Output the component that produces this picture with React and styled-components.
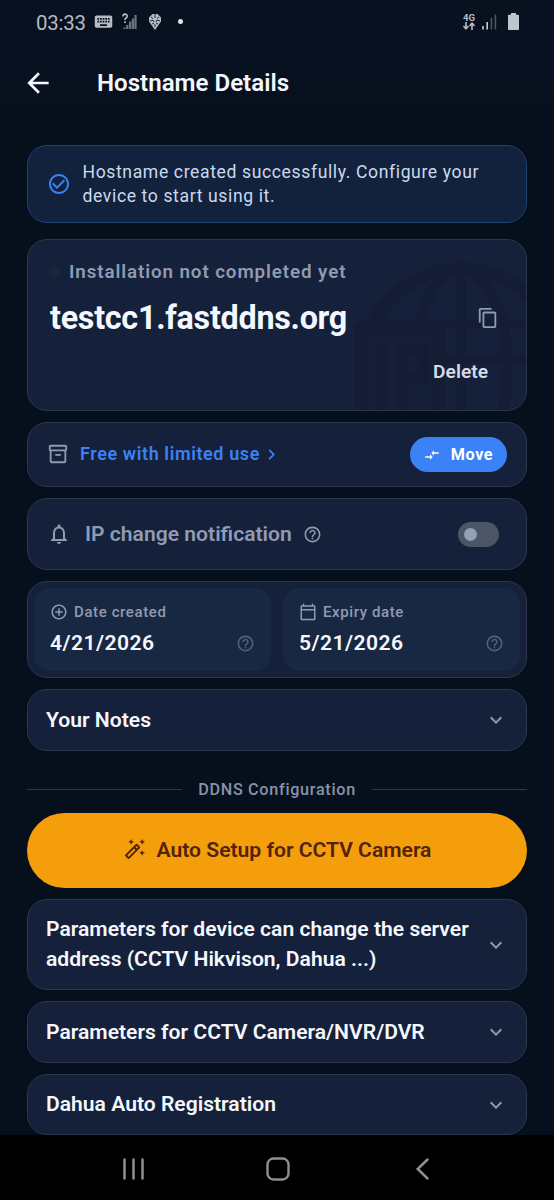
import React, { useState } from "react";
import styled, { createGlobalStyle, ThemeProvider } from "styled-components";
import {
  MdAddCircleOutline,
  MdArrowBack,
  MdCheckCircleOutline,
  MdChevronRight,
  MdCompareArrows,
  MdContentCopy,
  MdHelpOutline,
  MdKeyboard,
  MdKeyboardArrowDown,
  MdNotificationsNone,
  MdOutlineAutoFixHigh,
  MdOutlineCalendarToday,
  MdOutlineInventory2,
} from "react-icons/md";

const theme = {
  colors: {
    page: "#05101c",
    bar: "#08111f",
    card: "#15203a",
    tile: "#182742",
    border: "#2c374b",
    text: "#f4f8fe",
    muted: "#8f9bb3",
    faint: "#52617a",
    primary: "#3b82f6",
    accent: "#f59e0b",
    onAccent: "#52230a",
    status: "#b6bcc4",
  },
};

const GlobalStyle = createGlobalStyle`
  * {
    box-sizing: border-box;
  }

  body {
    margin: 0;
    background: ${theme.colors.page};
    font-family: Roboto, "Liberation Sans", sans-serif;
  }

  button {
    font-family: inherit;
    border: none;
    padding: 0;
    background: none;
    color: inherit;
  }

  h1, h2, p {
    margin: 0;
  }

  svg {
    display: block;
    flex-shrink: 0;
  }
`;

const Screen = styled.div`
  width: 554px;
  height: 1200px;
  display: flex;
  flex-direction: column;
  overflow: hidden;
  background: ${({ theme }) => theme.colors.page};
  color: ${({ theme }) => theme.colors.text};
`;

const StatusBar = styled.div`
  height: 44px;
  flex-shrink: 0;
  display: flex;
  align-items: center;
  padding: 0 35px 1px 36px;
  color: ${({ theme }) => theme.colors.status};
  background: ${({ theme }) => theme.colors.bar};
`;

const Clock = styled.span`
  width: 57px;
  font-size: 20.4px;
  letter-spacing: -0.2px;
  padding-top: 3px;
`;

const StatusIcons = styled.div`
  display: flex;
  align-items: center;
  gap: 8px;
`;

const Spacer = styled.div`
  flex: 1;
`;

const NetworkType = styled.div`
  display: flex;
  flex-direction: column;
  align-items: center;
  margin-right: -1px;
  font-size: 9.5px;
  font-weight: 700;
  line-height: 9px;
`;

const Brain = styled.svg`
  margin-left: 4px;
`;

const Battery = styled.svg`
  margin-left: 3px;
`;

const Dot = styled.span`
  width: 5px;
  height: 5px;
  margin-left: 9px;
  border-radius: 50%;
  background: #dfe4ea;
`;

const AppBar = styled.header`
  height: 78px;
  flex-shrink: 0;
  display: flex;
  align-items: center;
  gap: 43px;
  padding-left: 22px;
  background: linear-gradient(
    ${({ theme }) => theme.colors.bar} 50%,
    ${({ theme }) => theme.colors.page}
  );
`;

const PageTitle = styled.h1`
  font-size: 24.1px;
  font-weight: 600;
`;

const Content = styled.main`
  flex: 1;
  min-height: 0;
  overflow: hidden;
  display: flex;
  flex-direction: column;
  gap: 11px;
  padding: 23px 27px 0;
`;

const Card = styled.section`
  flex-shrink: 0;
  display: flex;
  align-items: center;
  height: ${({ $height }) => $height}px;
  padding: ${({ $padding }) => $padding || "0 19px"};
  border: 1px solid ${({ theme }) => theme.colors.border};
  border-radius: 20px;
  background: ${({ theme }) => theme.colors.card};
`;

const MutedCard = styled(Card)`
  color: ${({ theme }) => theme.colors.muted};
`;

const DatesCard = styled(Card)`
  gap: 12px;
`;

const Banner = styled(Card)`
  gap: 11.5px;
  margin-bottom: 5px;
  border-color: #1f427a;
  background: #12223d;
  color: ${({ theme }) => theme.colors.primary};
`;

const BannerText = styled.p`
  margin-top: -1px;
  font-size: 17.6px;
  line-height: 24px;
  letter-spacing: 0.61px;
  color: #cbd9ee;
`;

const HostCard = styled(Card)`
  position: relative;
  overflow: hidden;
  flex-direction: column;
  align-items: stretch;
`;

const Watermark = styled.svg`
  position: absolute;
  right: -2px;
  top: 16px;
`;

const InstallState = styled.p`
  position: relative;
  display: flex;
  align-items: center;
  gap: 9px;
  font-size: 18.8px;
  font-weight: 600;
  line-height: 22px;
  letter-spacing: 0.9px;
  color: ${({ theme }) => theme.colors.muted};

  &::before {
    content: "";
    width: 10px;
    height: 10px;
    border-radius: 50%;
    background: #1b2539;
  }
`;

const HostRow = styled.div`
  position: relative;
  display: flex;
  align-items: center;
  justify-content: space-between;
  margin-top: 16px;
  color: ${({ theme }) => theme.colors.muted};
`;

const HostName = styled.h2`
  font-size: 32.3px;
  font-weight: 700;
  line-height: 38px;
  letter-spacing: -0.27px;
  color: ${({ theme }) => theme.colors.text};
`;

const DeleteButton = styled.button`
  position: relative;
  align-self: flex-end;
  margin: 23px 11px 0 0;
  font-size: 19.2px;
  font-weight: 600;
  line-height: 24px;
  color: #d5dbe6;
`;

const PlanLink = styled.a`
  display: flex;
  align-items: center;
  gap: 1px;
  margin-left: 11px;
  font-size: 18px;
  font-weight: 600;
  line-height: 22px;
  letter-spacing: 0.6px;
  color: ${({ theme }) => theme.colors.primary};
`;

const MoveButton = styled.button`
  display: flex;
  align-items: center;
  justify-content: center;
  gap: 11px;
  width: 97px;
  height: 35px;
  margin-top: 1px;
  border-radius: 18px;
  font-size: 16.2px;
  font-weight: 700;
  letter-spacing: 0.6px;
  color: #fff;
  background: ${({ theme }) => theme.colors.primary};
`;

const SettingLabel = styled.span`
  margin: -2px 11px 0 14px;
  font-size: 21.1px;
  font-weight: 600;
`;

const Toggle = styled.button`
  display: flex;
  align-items: center;
  justify-content: ${({ $on }) => ($on ? "flex-end" : "flex-start")};
  width: 41px;
  height: 25px;
  padding: 0 6px;
  border-radius: 13px;
  background: ${({ theme, $on }) => ($on ? theme.colors.primary : "#4b5566")};

  &::after {
    content: "";
    width: 13px;
    height: 13px;
    border-radius: 50%;
    background: #94a0b3;
  }
`;

const DateTile = styled.div`
  flex: 1;
  height: 83px;
  padding: 14px 16px 0;
  border-radius: 16px;
  background: ${({ theme }) => theme.colors.tile};
`;

const DateLabel = styled.div`
  display: flex;
  align-items: center;
  gap: 6px;
  height: 20px;
  font-size: 15px;
  font-weight: 500;
  letter-spacing: 0.6px;
  color: ${({ theme }) => theme.colors.muted};
`;

const DateValue = styled.div`
  display: flex;
  align-items: center;
  justify-content: space-between;
  margin-top: 7px;
  font-size: 21.1px;
  font-weight: 600;
  line-height: 27px;
  letter-spacing: 0.45px;

  svg {
    margin-top: 1px;
    color: ${({ theme }) => theme.colors.faint};
  }
`;

const PanelTitle = styled.h2`
  flex: 1;
  padding-bottom: 1px;
  font-size: 21.1px;
  font-weight: 600;
  line-height: 30px;
  color: ${({ theme }) => theme.colors.text};
`;

const Divider = styled.div`
  display: flex;
  align-items: center;
  gap: 16px;
  height: 20px;
  margin: 18px 0 2.5px;
  font-size: 16.2px;
  font-weight: 500;
  letter-spacing: 0.7px;
  color: #8793a8;

  &::before,
  &::after {
    content: "";
    flex: 1;
    height: 1px;
    background: ${({ theme }) => theme.colors.border};
  }
`;

const SetupButton = styled.button`
  flex-shrink: 0;
  display: flex;
  align-items: center;
  justify-content: center;
  gap: 11px;
  height: 75.5px;
  padding-bottom: 1px;
  border-radius: 38px;
  font-size: 21.1px;
  font-weight: 600;
  color: ${({ theme }) => theme.colors.onAccent};
  background: ${({ theme }) => theme.colors.accent};
`;

const NavBar = styled.nav`
  height: 65px;
  flex-shrink: 0;
  display: flex;
  align-items: center;
  justify-content: space-between;
  padding: 2px 120px 0 122px;
  background: #000;
`;

function UnknownSignalIcon() {
  return (
    <svg width="15" height="17" viewBox="0 0 15 17" fill="none">
      <path d="M1 3.4C1 .4 5.2.4 5.2 3.2 5.2 5 3 4.9 3 7M3 8.2v1.7" stroke="#b6bcc4" strokeWidth="1.6" />
      <path d="M2.5 16v-1.5M5.3 16v-4M8.1 16V8.5M10.9 16V5.5M13.5 16V2" stroke="#6d7580" strokeWidth="2.2" />
    </svg>
  );
}

function BrainIcon() {
  return (
    <Brain width="12" height="16" viewBox="0 0 12 16">
      <path d="M3.5 0h5L12 3.5v4L9.5 11 6 16 2.5 11 0 7.5v-4z" fill="#b6bcc4" />
      <path
        d="M6 0v4M2 3l2 1.5M10 3 8 4.5M1 7l3-1 1 2M11 7 8 6 7 8M3 10l2-1M9 10 7 9M6 10v3"
        stroke="#111b28"
        strokeWidth="0.9"
        fill="none"
      />
    </Brain>
  );
}

function DataArrowsIcon() {
  return (
    <svg width="12" height="8" viewBox="0 0 12 8" fill="none" stroke="currentColor" strokeWidth="1.6">
      <path d="M3 0v6.5M.5 4 3 6.7 5.5 4M9 8V1.5M6.5 4 9 1.3 11.5 4" />
    </svg>
  );
}

function SignalIcon() {
  return (
    <svg width="15" height="17" viewBox="0 0 15 17" strokeWidth="1.6">
      <path d="M1 16.5V13M5.2 16.5V9" stroke="#c8ccd2" />
      <path d="M9.4 16.5V5M13.4 16.5v-15" stroke="#4b5460" />
    </svg>
  );
}

function BatteryIcon() {
  return (
    <Battery width="11" height="17" viewBox="0 0 11 17">
      <path d="M3 0h5v1.8h2.2q.8 0 .8.8V16q0 1-.8 1H.8Q0 17 0 16V2.6q0-.8.8-.8H3z" fill="#bfc5cc" />
    </Battery>
  );
}

function GlobeWatermark() {
  return (
    <Watermark width="176" height="160" viewBox="0 0 176 160" fill="none" stroke="#141d34">
      <circle cx="109" cy="111" r="98" strokeWidth="13" />
      <ellipse cx="109" cy="111" rx="46" ry="98" strokeWidth="11" />
      <path d="M109 12v148M92 68h84M92 103h84" strokeWidth="10" />
      <rect x="2" y="66" width="90" height="110" rx="4" fill="#151f38" stroke="none" />
      <path d="M9 160V76q0-4 4-4h74v88" strokeWidth="13" />
      <path d="M30 88v72M49 160V93h23v30H49" strokeWidth="11" />
    </Watermark>
  );
}

function DateInfo({ icon: Icon, label, value }) {
  return (
    <DateTile>
      <DateLabel>
        <Icon size={18} />
        {label}
      </DateLabel>
      <DateValue>
        {value}
        <MdHelpOutline size={19} />
      </DateValue>
    </DateTile>
  );
}

function Panel({ title, height }) {
  return (
    <MutedCard $height={height} $padding="0 18px">
      <PanelTitle>{title}</PanelTitle>
      <MdKeyboardArrowDown size={24} />
    </MutedCard>
  );
}

export default function App() {
  const [notify, setNotify] = useState(false);

  return (
    <ThemeProvider theme={theme}>
      <GlobalStyle />
      <Screen>
        <StatusBar>
          <Clock>03:33</Clock>
          <StatusIcons>
            <MdKeyboard size={21} />
            <UnknownSignalIcon />
            <BrainIcon />
            <Dot />
          </StatusIcons>
          <Spacer />
          <StatusIcons>
            <NetworkType>
              4G
              <DataArrowsIcon />
            </NetworkType>
            <SignalIcon />
            <BatteryIcon />
          </StatusIcons>
        </StatusBar>

        <AppBar>
          <MdArrowBack size={32} />
          <PageTitle>Hostname Details</PageTitle>
        </AppBar>

        <Content>
          <Banner $height={78}>
            <MdCheckCircleOutline size={24} />
            <BannerText>
              Hostname created successfully. Configure your device to start using it.
            </BannerText>
          </Banner>

          <HostCard $height={172} $padding="21px 27px 0 22px">
            <GlobeWatermark />
            <InstallState>Installation not completed yet</InstallState>
            <HostRow>
              <HostName>testcc1.fastddns.org</HostName>
              <MdContentCopy size={22} />
            </HostRow>
            <DeleteButton>Delete</DeleteButton>
          </HostCard>

          <MutedCard $height={65} $padding="0 19px 1px">
            <MdOutlineInventory2 size={22} />
            <PlanLink>
              Free with limited use
              <MdChevronRight size={21} />
            </PlanLink>
            <Spacer />
            <MoveButton>
              <MdCompareArrows size={16} />
              Move
            </MoveButton>
          </MutedCard>

          <MutedCard $height={72} $padding="0 27px 0 19px">
            <MdNotificationsNone size={24} />
            <SettingLabel>IP change notification</SettingLabel>
            <MdHelpOutline size={19} />
            <Spacer />
            <Toggle $on={notify} onClick={() => setNotify(!notify)} aria-label="IP change notification" />
          </MutedCard>

          <DatesCard $height={97} $padding="0 6px">
            <DateInfo icon={MdAddCircleOutline} label="Date created" value="4/21/2026" />
            <DateInfo icon={MdOutlineCalendarToday} label="Expiry date" value="5/21/2026" />
          </DatesCard>

          <Panel title="Your Notes" height={62} />

          <Divider>DDNS Configuration</Divider>

          <SetupButton>
            <MdOutlineAutoFixHigh size={23} />
            Auto Setup for CCTV Camera
          </SetupButton>

          <Panel title="Parameters for device can change the server address (CCTV Hikvison, Dahua ...)" height={91} />
          <Panel title="Parameters for CCTV Camera/NVR/DVR" height={62} />
          <Panel title="Dahua Auto Registration" height={61} />
        </Content>

        <NavBar>
          <svg width="23" height="22" viewBox="0 0 23 22" stroke="#8f8f8f" strokeWidth="2.5" strokeLinecap="round">
            <path d="M2.5 1.5v19M11.5 1.5v19M20.5 1.5v19" />
          </svg>
          <svg width="24" height="24" viewBox="0 0 24 24" fill="none" stroke="#8f8f8f" strokeWidth="2.4">
            <rect x="1.5" y="1.5" width="21" height="21" rx="6" />
          </svg>
          <svg width="23" height="22" viewBox="0 0 23 22" fill="none" stroke="#8f8f8f" strokeWidth="2.5" strokeLinecap="round">
            <path d="M16.5 1.5 6.7 11l9.8 9.5" />
          </svg>
        </NavBar>
      </Screen>
    </ThemeProvider>
  );
}
